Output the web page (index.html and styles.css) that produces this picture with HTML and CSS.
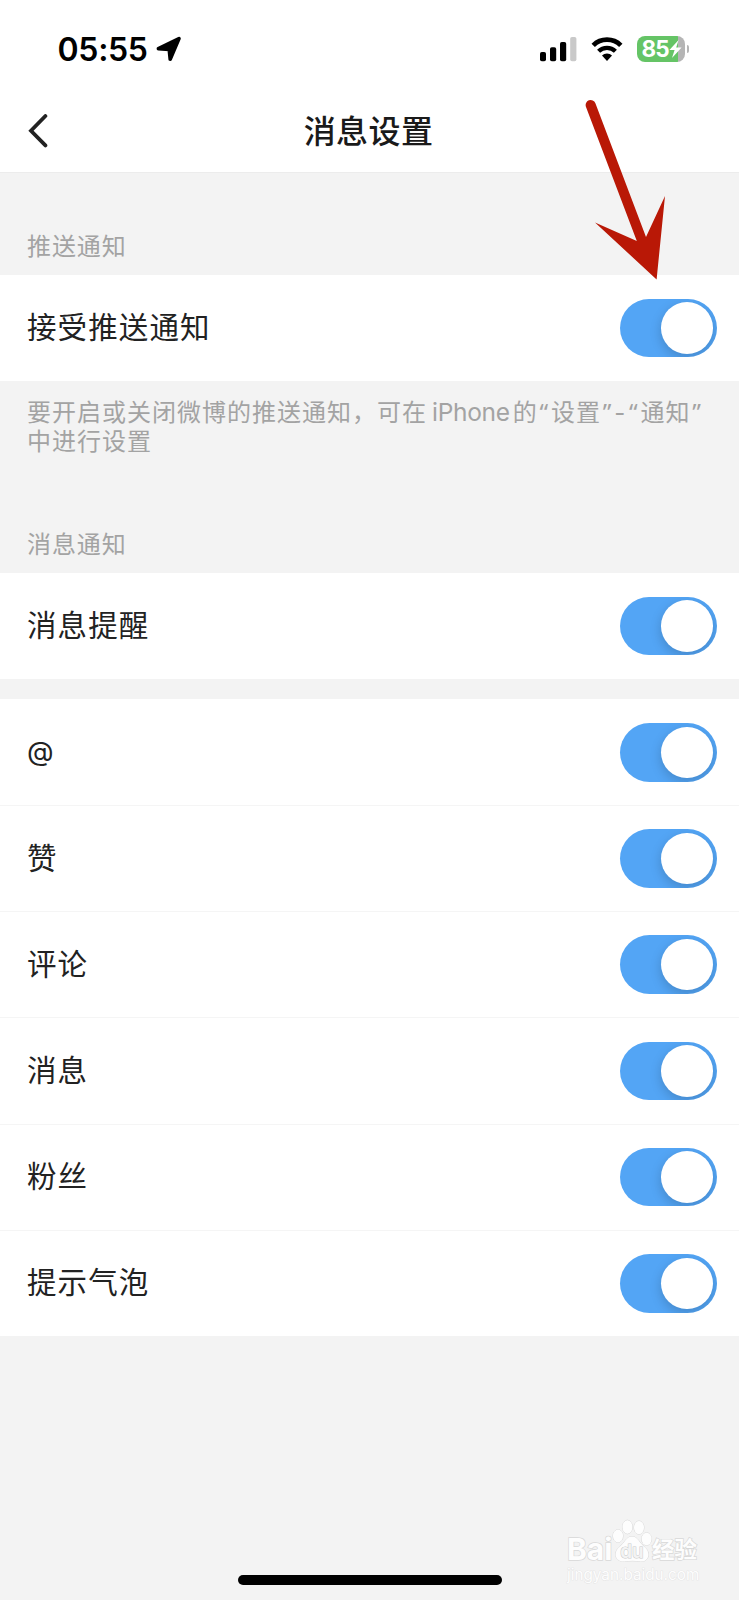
FILE: index.html
```
<!DOCTYPE html>
<html lang="zh-CN">
<head>
  <meta charset="UTF-8">
  <meta name="viewport" content="width=device-width, initial-scale=1.0">
  <title>消息设置</title>
  <link rel="stylesheet" href="styles.css">
</head>
<body>
  <div class="phone">
    <div class="status-bar">
      <div class="status-left">
        <span class="time">05:55</span>
        <svg class="location" width="26" height="26" viewBox="0 0 26 26">
          <path d="M2.4 12.6 L23 2.6 L14.2 23.2 L13.2 13.4 Z"/>
        </svg>
      </div>
      <div class="status-right">
        <svg class="signal" width="37" height="25" viewBox="0 0 37 25">
          <rect x="0" y="15" width="6" height="9.2" rx="1.8"/>
          <rect x="10" y="10.2" width="6.2" height="14" rx="1.8"/>
          <rect x="20" y="5" width="6.2" height="19.2" rx="1.8"/>
          <rect x="30.2" y="0" width="6.2" height="24.2" rx="1.8" fill="#c9c9c9"/>
        </svg>
        <svg class="wifi" width="32" height="25" viewBox="0 0 32 25">
          <path d="M2.2 8.4 A19.6 19.6 0 0 1 29.8 8.4" fill="none" stroke="#000" stroke-width="4.8"/>
          <path d="M7.6 14.3 A12 12 0 0 1 24.4 14.3" fill="none" stroke="#000" stroke-width="4.3"/>
          <path d="M11 18.6 A7 7 0 0 1 21 18.6 L16 24 Z"/>
        </svg>
        <div class="battery">
          <span class="battery-text">85</span>
          <svg class="bolt" width="13" height="18" viewBox="0 0 13 18">
            <path d="M9.6 0 L0.4 10 H5.6 L3 18 L12.6 7.4 H7.2 Z"/>
          </svg>
        </div>
        <span class="battery-cap"></span>
      </div>
    </div>

    <div class="nav-bar">
      <svg class="back" width="20" height="34" viewBox="0 0 20 34">
        <path d="M17.4 2 L3 16.8 L17.4 31.4"/>
      </svg>
      <h1 class="title">消息设置</h1>
    </div>

    <div class="section-label first">推送通知</div>
    <div class="group">
      <div class="row"><span class="name">接受推送通知</span><span class="switch"></span></div>
    </div>
    <p class="hint">要开启或关闭微博的推送通知，可在<span class="latin">iPhone</span>的<span class="quote">“</span>设置<span class="quote">”</span><span class="dash">-</span><span class="quote">“</span>通知<span class="quote">”</span><br>中进行设置</p>

    <div class="section-label second">消息通知</div>
    <div class="group">
      <div class="row"><span class="name">消息提醒</span><span class="switch"></span></div>
    </div>
    <div class="group list">
      <div class="row"><span class="name at">@</span><span class="switch"></span></div>
      <div class="row"><span class="name">赞</span><span class="switch"></span></div>
      <div class="row"><span class="name">评论</span><span class="switch"></span></div>
      <div class="row"><span class="name">消息</span><span class="switch"></span></div>
      <div class="row"><span class="name">粉丝</span><span class="switch"></span></div>
      <div class="row"><span class="name">提示气泡</span><span class="switch"></span></div>
    </div>

    <!-- pointer over the first switch -->
    <svg class="arrow" width="84" height="184" viewBox="0 0 84 184">
      <path d="M6 6.9 A5 5 0 0 1 15.4 3.2 L66 137 L85 96 L76.6 179.4 L15 122.6 L56.8 141 Z"/>
    </svg>

    <div class="watermark">
      <div class="brand">
        <span class="bai">Bai</span>
        <svg class="paw" width="38" height="44" viewBox="0 0 38 44">
          <ellipse cx="4" cy="17" rx="5" ry="6.4"/>
          <ellipse cx="13.4" cy="8" rx="5" ry="6.8"/>
          <ellipse cx="25" cy="8.6" rx="5" ry="6.6"/>
          <ellipse cx="32.6" cy="20" rx="5" ry="6.2"/>
          <path d="M18 17.5 C23.5 17.5 25.5 24 30.5 28 C37.5 34 34.5 43 26.5 42.5 C21.5 41.6 15.5 41.6 10.5 42.5 C1.5 43 -1.5 34 5.5 28 C10.5 24 12.5 17.5 18 17.5 Z"/>
          <text x="18" y="38.5" text-anchor="middle">du</text>
        </svg>
        <span class="jy">经验</span>
      </div>
      <div class="site">jingyan.baidu.com</div>
    </div>
    <div class="home-indicator"></div>
  </div>
</body>
</html>
```
FILE: styles.css
```
* {
  box-sizing: border-box;
}

body {
  margin: 0;
  background: #f3f3f3;
  color: #222;
  font-family: Inter, "Noto Sans CJK SC", sans-serif;
}

.phone {
  position: relative;
  width: 739px;
  height: 1600px;
  overflow: hidden;
}

.status-bar {
  display: flex;
  justify-content: space-between;
  height: 98px;
  padding: 0 50px 0 57.5px;
  background: #fff;
}

.status-left,
.status-right {
  display: flex;
  align-items: center;
  height: 98px;
}

.time {
  padding-top: 2px;
  font-size: 32px;
  font-weight: 600;
  line-height: 40px;
  letter-spacing: -0.3px;
  color: #000;
}

.location {
  margin-left: 8px;
  stroke: #000;
  stroke-width: 3.6;
  stroke-linejoin: round;
}

.signal {
  margin-right: 14px;
}

.wifi {
  margin-right: 14px;
}

.battery {
  display: flex;
  align-items: center;
  width: 48px;
  height: 26px;
  padding-left: 4.5px;
  border-radius: 8px;
  background: linear-gradient(90deg, #65c466 41px, #b5b5b5 41px);
}

.battery-text {
  font-size: 22.5px;
  font-weight: 700;
  line-height: 26px;
  letter-spacing: -0.8px;
  color: #fff;
}

.bolt {
  fill: #fff;
}

.battery-cap {
  width: 2px;
  height: 8px;
  margin-left: 2px;
  border-radius: 0 2px 2px 0;
  background: #b5b5b5;
}

.nav-bar {
  display: grid;
  grid-template-columns: 100px 1fr 100px;
  align-items: center;
  height: 74.5px;
  padding-bottom: 8px;
  background: #fff;
  border-bottom: 1px solid #ececec;
}

.back {
  margin-left: 28px;
  fill: none;
  stroke: #222;
  stroke-width: 3.8;
  stroke-linecap: round;
}

.title {
  margin: 0;
  padding: 3px 2px 0 0;
  font-size: 32px;
  font-weight: 500;
  line-height: 48px;
  letter-spacing: 0.4px;
  text-align: center;
  color: #1a1a1a;
}

.section-label {
  height: 72px;
  padding: 26px 27px 0;
  font-size: 24px;
  line-height: 36px;
  letter-spacing: 0.9px;
  color: #a3a3a3;
}

.section-label.first {
  height: 102px;
  padding-top: 56.5px;
}

.section-label.second {
  height: 72.4px;
  padding-top: 27px;
}

.group {
  background: #fff;
}

.row {
  display: flex;
  justify-content: space-between;
  align-items: center;
  height: 106.2px;
  padding: 1px 22.5px 0 27px;
}

.name {
  padding-bottom: 2px;
  font-size: 29.5px;
  line-height: 44px;
  letter-spacing: 1.1px;
}

.at {
  font-size: 27.5px;
  padding-bottom: 3px;
}

.list {
  margin-top: 20px;
}

.list .row + .row {
  padding-top: 0;
  border-top: 1px solid #f5f5f5;
}

.switch {
  width: 96.5px;
  height: 58.5px;
  padding: 3.5px 3.5px 0 41px;
  border-radius: 30px;
  background: #53a5f5;
  overflow: hidden;
}

.switch::before {
  content: "";
  display: block;
  width: 52px;
  height: 51.5px;
  border-radius: 50%;
  background: #fff;
  box-shadow: 0 4px 12px rgba(0, 0, 0, 0.18);
}

.hint {
  height: 119.5px;
  margin: 0;
  padding: 16px 0 0 27px;
  font-size: 24px;
  line-height: 29.3px;
  letter-spacing: 1px;
  white-space: nowrap;
  color: #a3a3a3;
}

.latin {
  margin: 0 3px 0 5px;
  font-size: 24.5px;
  letter-spacing: -0.3px;
}

.quote {
  margin: 0 1.8px;
  font-family: "Noto Sans", sans-serif;
}

.dash {
  margin: 0 1px 0 0;
}

.arrow {
  position: absolute;
  left: 580px;
  top: 100px;
  overflow: visible;
  fill: #b91806;
}

.watermark {
  position: absolute;
  left: 567px;
  top: 1519px;
  width: 134px;
  color: #fdfdfd;
  -webkit-text-stroke: 1.4px #d8d8d8;
  paint-order: stroke fill;
}

.brand {
  display: flex;
  align-items: flex-end;
  height: 44px;
}

.bai {
  width: 47px;
  font-size: 30px;
  font-weight: 700;
  line-height: 27px;
  height: 27px;
}

.paw {
  flex: none;
  fill: #fdfdfd;
  stroke: #d8d8d8;
  stroke-width: 1;
  overflow: visible;
}

.paw text {
  font-size: 19px;
  font-weight: 600;
  fill: #f3f3f3;
  stroke: #ccc;
}

.jy {
  height: 27px;
  font-size: 22.5px;
  font-weight: 700;
  line-height: 27px;
}

.site {
  padding-top: 2px;
  font-size: 15.3px;
  line-height: 20px;
  -webkit-text-stroke: 0.7px #e0e0e0;
}

.home-indicator {
  position: absolute;
  left: 238px;
  top: 1575px;
  width: 264px;
  height: 10px;
  border-radius: 5px;
  background: #000;
}
```
